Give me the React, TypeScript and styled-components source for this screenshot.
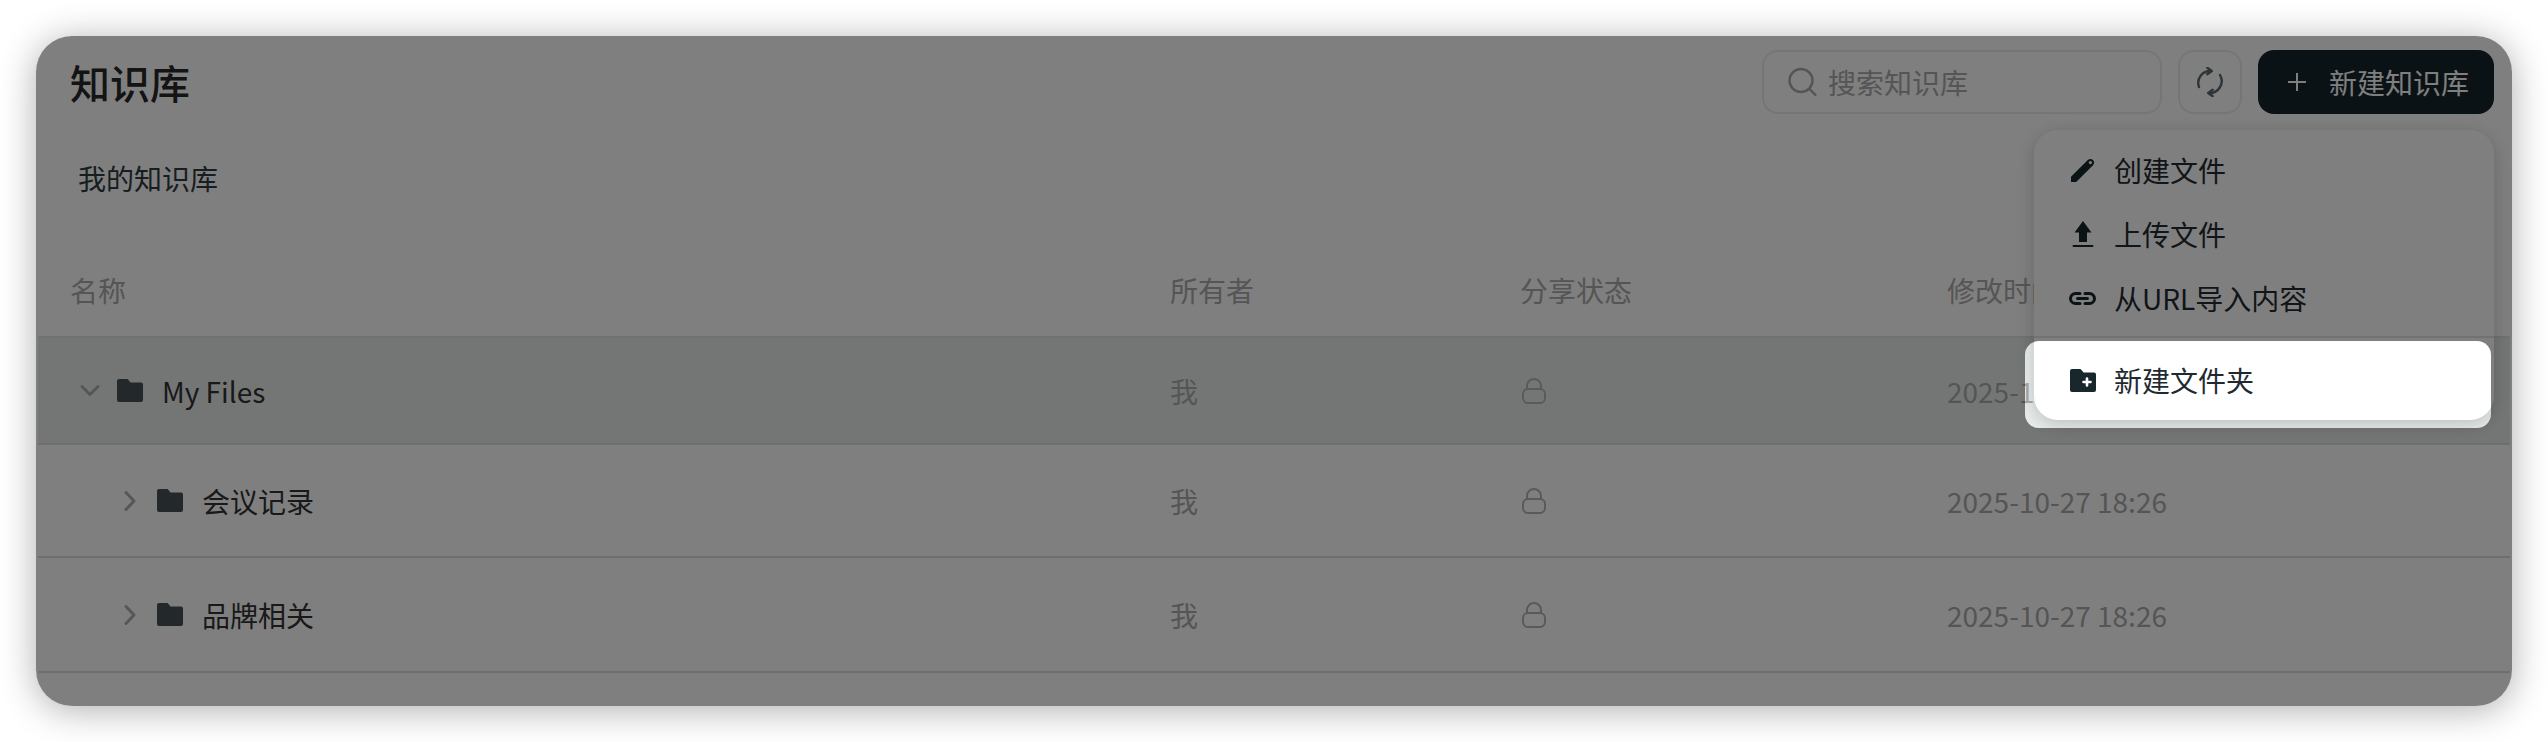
import React from "react";
import styled, { createGlobalStyle } from "styled-components";

const GlobalStyle = createGlobalStyle`
  html, body {
    margin: 0;
    padding: 0;
    background: #fff;
  }
  body {
    font-family: "Noto Sans CJK SC", "Noto Sans", sans-serif;
  }
`;

const Page = styled.div`
  padding: 36px;
  width: 2548px;
  height: 742px;
  box-sizing: border-box;
`;

const Card = styled.main`
  position: relative;
  height: 670px;
  border-radius: 36px;
  background: #fff;
  overflow: hidden;
  box-shadow: 0 4px 36px rgba(0, 0, 0, 0.32);
`;

const Header = styled.header`
  display: flex;
  align-items: center;
  justify-content: space-between;
  height: 64px;
  padding: 14px 18px 0 34px;
`;

const Title = styled.h1`
  margin: 0;
  font-size: 40px;
  line-height: 56px;
  font-weight: 500;
  color: #282828;
`;

const Actions = styled.div`
  display: flex;
  align-items: center;
  gap: 16px;
`;

const SearchBox = styled.div`
  display: flex;
  align-items: center;
  gap: 10px;
  width: 400px;
  height: 64px;
  padding-left: 24px;
  box-sizing: border-box;
  border: 2px solid #ebebeb;
  border-radius: 16px;
  font-size: 28px;
  color: #aaa;
`;

const IconButton = styled.button`
  display: flex;
  align-items: center;
  justify-content: center;
  width: 64px;
  height: 64px;
  padding: 0;
  border: 2px solid #ebebeb;
  border-radius: 16px;
  background: #fff;
`;

const PrimaryButton = styled.button`
  display: flex;
  align-items: center;
  gap: 23px;
  width: 236px;
  height: 64px;
  padding: 0 0 0 30px;
  border: 0;
  border-radius: 16px;
  background: #15242a;
  color: #fff;
  font: inherit;
  font-size: 28px;
`;

const Tabs = styled.nav`
  display: flex;
  align-items: center;
  height: 131px;
  padding: 0 0 4px 42px;
  box-sizing: border-box;
  font-size: 28px;
  color: #303a3e;
`;

const Table = styled.div`
  margin: 0 2px;
`;

const columns = "1132px 350px 427px 1fr";

const HeadRow = styled.div`
  display: grid;
  grid-template-columns: ${columns};
  align-items: center;
  height: 93px;
  padding-bottom: 1px;
  box-sizing: border-box;
  border-bottom: 2px solid #e2e2e2;
  font-size: 28px;
  color: #aaa;
`;

const HeadName = styled.div`
  padding-left: 32px;
`;

const Row = styled.div<{ $height: number; $active?: boolean }>`
  display: grid;
  grid-template-columns: ${columns};
  align-items: center;
  height: ${(p) => p.$height}px;
  box-sizing: border-box;
  border-bottom: 2px solid #dcdcdc;
  background: ${(p) => (p.$active ? "#e9edeb" : "#fff")};
  font-size: 28px;
  color: #aaa;
`;

const NameCell = styled.div<{ $depth: number }>`
  display: flex;
  align-items: center;
  padding-left: ${(p) => 40 + p.$depth * 40}px;
  color: #333;
`;

const ChevronSlot = styled.span`
  display: flex;
  align-items: center;
  justify-content: center;
  width: 24px;
  margin-right: 15px;
`;

const FolderSlot = styled.span`
  display: flex;
  margin-right: 19px;
`;

const LockCell = styled.div`
  display: flex;
  padding-left: 1px;
`;

const Menu = styled.div`
  position: absolute;
  top: 94px;
  right: 18px;
  width: 460px;
  height: 290px;
  padding-top: 8px;
  box-sizing: border-box;
  border-radius: 24px;
  background: #fff;
  box-shadow: 0 4px 18px rgba(20, 30, 40, 0.22);
`;

const MenuItem = styled.div`
  display: flex;
  align-items: center;
  height: 64px;
  padding-left: 35px;
  font-size: 28px;
  color: #1f2a30;
`;

const MenuIcon = styled.span`
  display: flex;
  align-items: center;
  justify-content: center;
  width: 27px;
  margin-right: 18px;
`;

const MenuDivider = styled.div`
  height: 2px;
  margin: 6px 0 10px;
  background: #e4e4e4;
`;

/* dims the whole card except the highlighted menu item */
const Spotlight = styled.div`
  position: absolute;
  left: 1989px;
  top: 305px;
  width: 466px;
  height: 87px;
  border-radius: 14px;
  box-shadow: 0 0 0 3000px rgba(0, 0, 0, 0.5);
  pointer-events: none;
`;

const FolderIcon = ({ plus }: { plus?: boolean }) => (
  <svg width="26" height="23" viewBox="0 0 26 23">
    <path
      d="M2 0h7.5c1 0 1.6.4 2.2 1.2l1.8 2.3H24a2 2 0 0 1 2 2V21a2 2 0 0 1-2 2H2a2 2 0 0 1-2-2V2a2 2 0 0 1 2-2z"
      fill={plus ? "#18272c" : "#465054"}
    />
    {plus && <path d="M17 9.5v7M13.5 13h7" stroke="#fff" strokeWidth="2.6" strokeLinecap="round" />}
  </svg>
);

const Chevron = ({ open }: { open?: boolean }) => (
  <svg width="24" height="24" viewBox="0 0 24 24" fill="none" stroke="#a8aeb4" strokeWidth="3" strokeLinecap="round" strokeLinejoin="round">
    <path d={open ? "M4 7.5l8 8 8-8" : "M8 3.5l8 8.5-8 8.5"} />
  </svg>
);

const LockIcon = () => (
  <svg width="26" height="26" viewBox="0 0 26 26" fill="none" stroke="#b4b4b4" strokeWidth="2">
    <rect x="2" y="11" width="22" height="14" rx="5" />
    <path d="M6 11V8a7 7 0 0 1 14 0v3" />
  </svg>
);

const SearchIcon = () => (
  <svg width="30" height="30" viewBox="0 0 30 30" fill="none" stroke="#aaa" strokeWidth="2.4" strokeLinecap="round">
    <circle cx="13" cy="13.5" r="11.5" />
    <path d="M21.5 22l6 6" />
  </svg>
);

const RefreshIcon = () => (
  <svg width="28" height="30" viewBox="0 0 28 30" fill="none" stroke="#5c6a70" strokeWidth="2.4" strokeLinecap="round" strokeLinejoin="round">
    <path d="M3 20A12 12 0 0 1 15.5 4" />
    <path d="M11.3 0.7l4.4 3.3-4.4 3.3" />
    <path d="M24 8A12 12 0 0 1 12.5 26" />
    <path d="M16.7 22.7L12.3 26l4.4 3.3" />
  </svg>
);

const PlusIcon = () => (
  <svg width="18" height="18" viewBox="0 0 18 18" stroke="#fff" strokeWidth="2">
    <path d="M9 0v18M0 9h18" />
  </svg>
);

const PencilIcon = () => (
  <svg width="24" height="24" viewBox="0 0 24 24">
    <path d="M0 24v-5.2L16.8 2a4 4 0 0 1 5.2 0 4 4 0 0 1 0 5.2L5.2 24z" fill="#18272c" />
    <circle cx="19.4" cy="4.6" r="1.6" fill="#fff" />
  </svg>
);

const UploadIcon = () => (
  <svg width="22" height="26" viewBox="0 0 22 26">
    <path d="M11 0l8.5 11.5H15v9.5H7v-9.5H2.5z" fill="#18272c" />
    <rect x="0.5" y="24" width="21" height="2" rx="1" fill="#18272c" />
  </svg>
);

const LinkIcon = () => (
  <svg width="27" height="13" viewBox="0 0 27 13" fill="none" stroke="#18272c" strokeWidth="3" strokeLinecap="round">
    <path d="M11 1.5H6.5a5 5 0 0 0 0 10H11" />
    <path d="M16 1.5h4.5a5 5 0 0 1 0 10H16" />
    <path d="M8.5 6.5h10" />
  </svg>
);

const rows = [
  { name: "My Files", depth: 0, open: true, height: 107 },
  { name: "会议记录", depth: 1, height: 113 },
  { name: "品牌相关", depth: 1, height: 115 },
];

const App: React.FC = () => {
  return (
    <Page>
      <GlobalStyle />
      <Card>
        <Header>
          <Title>知识库</Title>
          <Actions>
            <SearchBox>
              <SearchIcon />
              <span>搜索知识库</span>
            </SearchBox>
            <IconButton>
              <RefreshIcon />
            </IconButton>
            <PrimaryButton>
              <PlusIcon />
              新建知识库
            </PrimaryButton>
          </Actions>
        </Header>
        <Tabs>我的知识库</Tabs>
        <Table>
          <HeadRow>
            <HeadName>名称</HeadName>
            <div>所有者</div>
            <div>分享状态</div>
            <div>修改时间</div>
          </HeadRow>
          {rows.map((row) => (
            <Row key={row.name} $height={row.height} $active={row.open}>
              <NameCell $depth={row.depth}>
                <ChevronSlot>
                  <Chevron open={row.open} />
                </ChevronSlot>
                <FolderSlot>
                  <FolderIcon />
                </FolderSlot>
                {row.name}
              </NameCell>
              <div>我</div>
              <LockCell>
                <LockIcon />
              </LockCell>
              <div>2025-10-27 18:26</div>
            </Row>
          ))}
        </Table>
        <Menu>
          <MenuItem>
            <MenuIcon>
              <PencilIcon />
            </MenuIcon>
            创建文件
          </MenuItem>
          <MenuItem>
            <MenuIcon>
              <UploadIcon />
            </MenuIcon>
            上传文件
          </MenuItem>
          <MenuItem>
            <MenuIcon>
              <LinkIcon />
            </MenuIcon>
            从URL导入内容
          </MenuItem>
          <MenuDivider />
          <MenuItem>
            <MenuIcon>
              <FolderIcon plus />
            </MenuIcon>
            新建文件夹
          </MenuItem>
        </Menu>
        <Spotlight />
      </Card>
    </Page>
  );
};

export default App;
